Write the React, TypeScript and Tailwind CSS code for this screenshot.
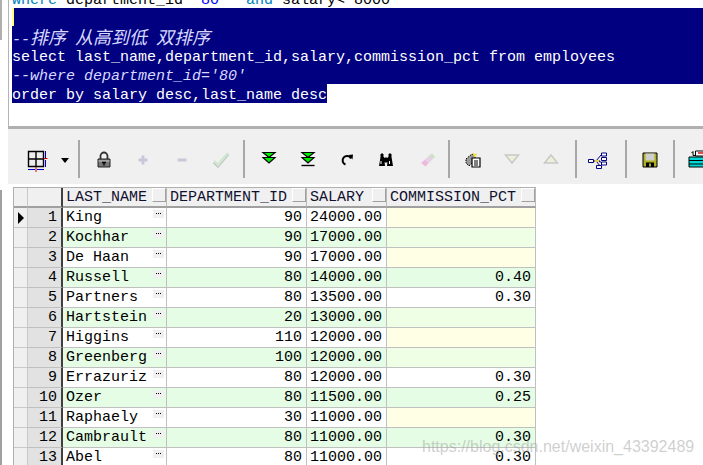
import React from 'react';

const rows = [
  ['King', '90', '24000.00', ''],
  ['Kochhar', '90', '17000.00', ''],
  ['De Haan', '90', '17000.00', ''],
  ['Russell', '80', '14000.00', '0.40'],
  ['Partners', '80', '13500.00', '0.30'],
  ['Hartstein', '20', '13000.00', ''],
  ['Higgins', '110', '12000.00', ''],
  ['Greenberg', '100', '12000.00', ''],
  ['Errazuriz', '80', '12000.00', '0.30'],
  ['Ozer', '80', '11500.00', '0.25'],
  ['Raphaely', '30', '11000.00', ''],
  ['Cambrault', '80', '11000.00', '0.30'],
  ['Abel', '80', '11000.00', '0.30'],
];

const Icon = ({ children }: { children: React.ReactNode }) => (
  <div className="w-[39px] h-[38px] shrink-0 flex items-center justify-center">
    <svg width="20" height="20" viewBox="0 0 20 20" className="mt-[2px]">{children}</svg>
  </div>
);

const Sep = ({ className }: { className: string }) => <div className={`w-[2px] h-[38px] shrink-0 bg-[#a8a8a8] ${className}`} />;

const GreenDown = ({ bar }: { bar?: boolean }) => (
  <Icon>
    <path d="M4 2.5h12L10 7.5z" fill="#00f000" stroke="#000" strokeWidth="1.2" />
    <path d="M4 7.5h12L10 13z" fill="#00f000" stroke="#000" strokeWidth="1.2" />
    {bar && <path d="M3.5 15.5h13" stroke="#000" strokeWidth="1.4" />}
  </Icon>
);

const HeaderCell = ({ label }: { label: string }) => (
  <div className="h-[20px] bg-[#f0f0f0] border-r border-b-2 border-r-[#b8b8b8] border-b-[#a0a0a0] flex justify-between pl-[3px] leading-[20px] text-[#101030]">
    <span>{label}</span>
    <span className="w-[14px] h-[14px] border border-t-white border-l-white border-r-[#a0a0a0] border-b-[#a0a0a0] bg-[#f0f0f0]" />
  </div>
);

export default function App() {
  return (
    <div className="w-[703px] h-[465px] overflow-hidden flex bg-white text-[15px] text-black font-['Liberation_Mono',monospace]">
      {/* left strip */}
      <div className="w-[8px] shrink-0 flex flex-col">
        <div className="w-[2px] h-[40px] bg-[#b0b0b0]" />
        <div className="w-[2px] h-[150px]" />
        <div className="w-[2px] flex-1 bg-[#a0a0a0]" />
      </div>

      <div className="flex-1 min-w-0 flex flex-col">
        {/* editor */}
        <div className="h-[129px] shrink-0 border-l border-[#b4b4b4] border-b-[3px] border-b-[#b0b0b0] overflow-hidden pl-[3px]">
          <div className="-mt-[11px] h-[19px] leading-[24px] whitespace-pre">
            <span className="text-[#0080c0]">where</span> department_id <span className="text-[#0000ff]">'80'</span>  <span className="text-[#0080c0]">and</span> salary&lt; 8000
          </div>
          <div className="bg-[#000080] text-white whitespace-pre leading-[24px]">
            <div className="h-[19px] flex"><span className="w-[2px] h-[18px] bg-[#ffff80]" /></div>
            <div className="h-[19px] italic text-[#d8d8ff] leading-[19px]">
              --<span className="font-['Noto_Sans_CJK_SC',sans-serif] text-[18px] leading-none">排序</span> <span className="font-['Noto_Sans_CJK_SC',sans-serif] text-[18px] leading-none">从高到低</span> <span className="font-['Noto_Sans_CJK_SC',sans-serif] text-[18px] leading-none">双排序</span>
            </div>
            <div className="h-[19px]">select last_name,department_id,salary,commission_pct from employees</div>
            <div className="h-[19px] italic text-[#d8d8ff]">--where department_id='80'</div>
          </div>
          <div className="h-[19px] w-[315px] bg-[#000080] text-white whitespace-pre leading-[24px] overflow-hidden">order by salary desc,last_name desc</div>
        </div>

        {/* toolbar */}
        <div className="h-[55px] shrink-0 bg-[#f0f0f0] flex items-start pt-[11px] overflow-hidden">
          <div className="w-[70px] h-[38px] shrink-0 flex items-center pl-[19px]">
            <svg className="mt-[5px]" width="24" height="24" viewBox="0 0 24 24">
              <path d="M1.5 1.5h15v15h-15z" fill="#eee" stroke="#000" strokeWidth="1.4" />
              <path d="M9 1.5v15M1.5 9h15" stroke="#000" strokeWidth="1.4" />
              <path d="M16.5 8.5h4" stroke="#d00000" strokeWidth="1" />
              <path d="M18.5 1v7M18.5 10v7M1 19.5h7M10 19.5h7" stroke="#0000c8" strokeWidth="1" />
              <path d="M9 17v5" stroke="#d00000" strokeWidth="1" />
            </svg>
            <svg className="ml-[10px] mt-[2px]" width="8" height="5" viewBox="0 0 8 5"><path d="M0 0h8L4 5z" fill="#000" /></svg>
          </div>
          <Sep className="" />
          <div className="flex shrink-0 ml-[4px]">
            <Icon>
              <path d="M6.5 9V6a3.5 3.5 0 0 1 7 0v3" fill="none" stroke="#333" strokeWidth="1.8" />
              <path d="M4 9h12v8H4z" fill="#777" stroke="#222" />
              <path d="M4.5 11h11" stroke="#ccc" />
              <path d="M8 12.5h4M10 12.5v3" stroke="#000" strokeWidth="1.4" />
            </Icon>
            <Icon><path d="M10 5.5v9M5.5 10h9" stroke="#c8c8da" strokeWidth="3" /></Icon>
            <Icon><path d="M5.5 10h9" stroke="#c8c8da" strokeWidth="3" /></Icon>
            <Icon>
              <path d="M3 12l4 4L17 4" fill="none" stroke="#c4c4c4" strokeWidth="3.2" />
              <path d="M3 11l4 4L17 3" fill="none" stroke="#cfe8cf" strokeWidth="2.4" />
            </Icon>
          </div>
          <Sep className="ml-[3px]" />
          <div className="flex shrink-0 ml-[4px]">
            <GreenDown />
            <GreenDown bar />
            <Icon>
              <path d="M14 8.5A4.4 4.4 0 1 0 8.5 14.5" fill="none" stroke="#000" strokeWidth="2" />
              <path d="M11.5 5l4.5-.5-.5 5z" fill="#000" />
            </Icon>
            <Icon>
              <path d="M3 16l1.5-9h3.5l1 9zM11 16l1-9h3.5l1.5 9z" fill="#000" />
              <path d="M5 7V4h2v3M13 7V4h2v3M8.5 8h3v4h-3z" fill="#000" stroke="#000" />
              <path d="M5 11v3M13.5 11v3" stroke="#fff" />
            </Icon>
            <Icon>
              <path d="M6 13L16 4l4 3L10.5 16z" fill="#e8d0e8" />
              <path d="M6.5 13l3-3 4 3-3 3.5z" fill="#f0b8dc" />
              <path d="M14 6l3-2.5 3 3-3 2.5z" fill="#cde2c4" />
            </Icon>
          </div>
          <Sep className="ml-[4px]" />
          <div className="flex shrink-0 ml-[3px]">
            <Icon>
              <path d="M3 9l6-5 3 2v4l-6 6-3-3z" fill="#999" stroke="#000" strokeDasharray="1.5 1" />
              <path d="M9 3l5 1-2 4z" fill="#f0e040" />
              <path d="M9 8h8v9H9z" fill="#fff" stroke="#000" strokeWidth="1.2" />
              <path d="M11 11h4M11 13h4M11 15h4" stroke="#000" />
            </Icon>
            <Icon><path d="M3.5 5h13L10 13z" fill="#f0f0d8" stroke="#c8c8c8" strokeWidth="1.5" /></Icon>
            <Icon><path d="M3.5 13h13L10 5z" fill="#f0f0d8" stroke="#c8c8c8" strokeWidth="1.5" /></Icon>
          </div>
          <Sep className="ml-[5px]" />
          <div className="flex shrink-0 ml-[1px]">
            <Icon>
              <path d="M4 11h8M8 11l5-6M8 11l5 1M8 11l5 6" stroke="#000080" strokeWidth="1" fill="none" />
              <path d="M0.5 9.5h5v3h-5z" fill="#fff" stroke="#000080" />
              <path d="M7 10h4v2H7z" fill="#e8d040" />
              <path d="M13.5 3h5v3h-5zM13.5 7.5h5v3h-5zM13.5 12h5v3h-5zM8.5 15.5h5v3h-5z" fill="#fff" stroke="#000080" />
            </Icon>
          </div>
          <Sep className="ml-[8px]" />
          <div className="flex shrink-0 ml-[3px]">
            <Icon>
              <path d="M3 3h14v14H3z" fill="#b0b020" stroke="#000" />
              <path d="M5.5 3.5h9v7h-9z" fill="#cfcfcf" />
              <path d="M6 12.5h8v4.5H6z" fill="#000" />
              <path d="M9 13.5h2v3H9z" fill="#b0b020" />
            </Icon>
          </div>
          <Sep className="ml-[4px]" />
          <div className="flex shrink-0 ml-[3px]">
            <Icon>
              <path d="M5 1.5v4h2M5 1.5l-1.5 1.5" stroke="#000" fill="none" />
              <path d="M7.5 1h10v5h-10z" fill="#fff" stroke="#000" />
              <path d="M10 3h5" stroke="#d00000" strokeWidth="1.4" />
              <path d="M1 7h18v10H1z" fill="#00d8d8" stroke="#000" />
              <path d="M1 10.5h18M1 14h18" stroke="#000" />
            </Icon>
          </div>
        </div>

        {/* result grid */}
        <div className="pt-[2px] pl-[5px] relative">
          <div className="w-[523px] border-l border-t border-[#b0b0b0] mt-[1px] grid grid-cols-[14px_35px_104px_140px_80px_149px] leading-[20px]">
            <div className="h-[20px] bg-[#f0f0f0] border-r border-b-2 border-r-[#c8c8c8] border-b-[#a0a0a0]" />
            <div className="h-[20px] bg-[#f0f0f0] border-r-2 border-b-2 border-r-[#404040] border-b-[#a0a0a0]" />
            <HeaderCell label="LAST_NAME" />
            <HeaderCell label="DEPARTMENT_ID" />
            <HeaderCell label="SALARY" />
            <HeaderCell label="COMMISSION_PCT" />

            {rows.map((r, i) => {
              const even = i % 2 === 1;
              const bg = even ? 'bg-[#e4fde4]' : 'bg-white';
              const cell = `h-[20px] border-r border-b border-[#c0c0c0] ${bg}`;
              const nullBg = even ? 'bg-[#efffe6]' : 'bg-[#ffffe6]';
              return (
                <React.Fragment key={r[0]}>
                  <div className="h-[20px] bg-[#f0f0f0] border-r border-b border-[#c8c8c8] flex items-center justify-center">
                    {i === 0 && <span className="w-0 h-0 border-y-[6px] border-y-transparent border-l-[6px] border-l-black" />}
                  </div>
                  <div className="h-[20px] bg-[#e2e2e2] border-r-2 border-b border-r-[#404040] border-b-[#c0c0c0] text-right pr-[4px]">{i + 1}</div>
                  <div className={`${cell} flex justify-between pl-[3px] pr-[2px]`}>
                    <span>{r[0]}</span>
                    <span className="w-[11px] h-[8px] mt-[2px] bg-[#f0f0f0] flex items-start justify-center gap-[1px] pt-[3px]">
                      <span className="w-[1px] h-[1px] bg-black" />
                      <span className="w-[1px] h-[1px] bg-black" />
                      <span className="w-[1px] h-[1px] bg-black" />
                    </span>
                  </div>
                  <div className={`${cell} text-right pr-[4px]`}>{r[1]}</div>
                  <div className={`${cell} text-right pr-[4px]`}>{r[2]}</div>
                  <div className={`h-[20px] border-r border-b border-[#c0c0c0] text-right pr-[4px] ${r[3] ? bg : nullBg}`}>{r[3]}</div>
                </React.Fragment>
              );
            })}
          </div>
          <div className="absolute left-[414px] top-[253px] text-[16px] leading-[20px] text-[#a0a0a0]/50 font-['Liberation_Sans',sans-serif] whitespace-nowrap">https://blog.csdn.net/weixin_43392489</div>
        </div>
      </div>
    </div>
  );
}
